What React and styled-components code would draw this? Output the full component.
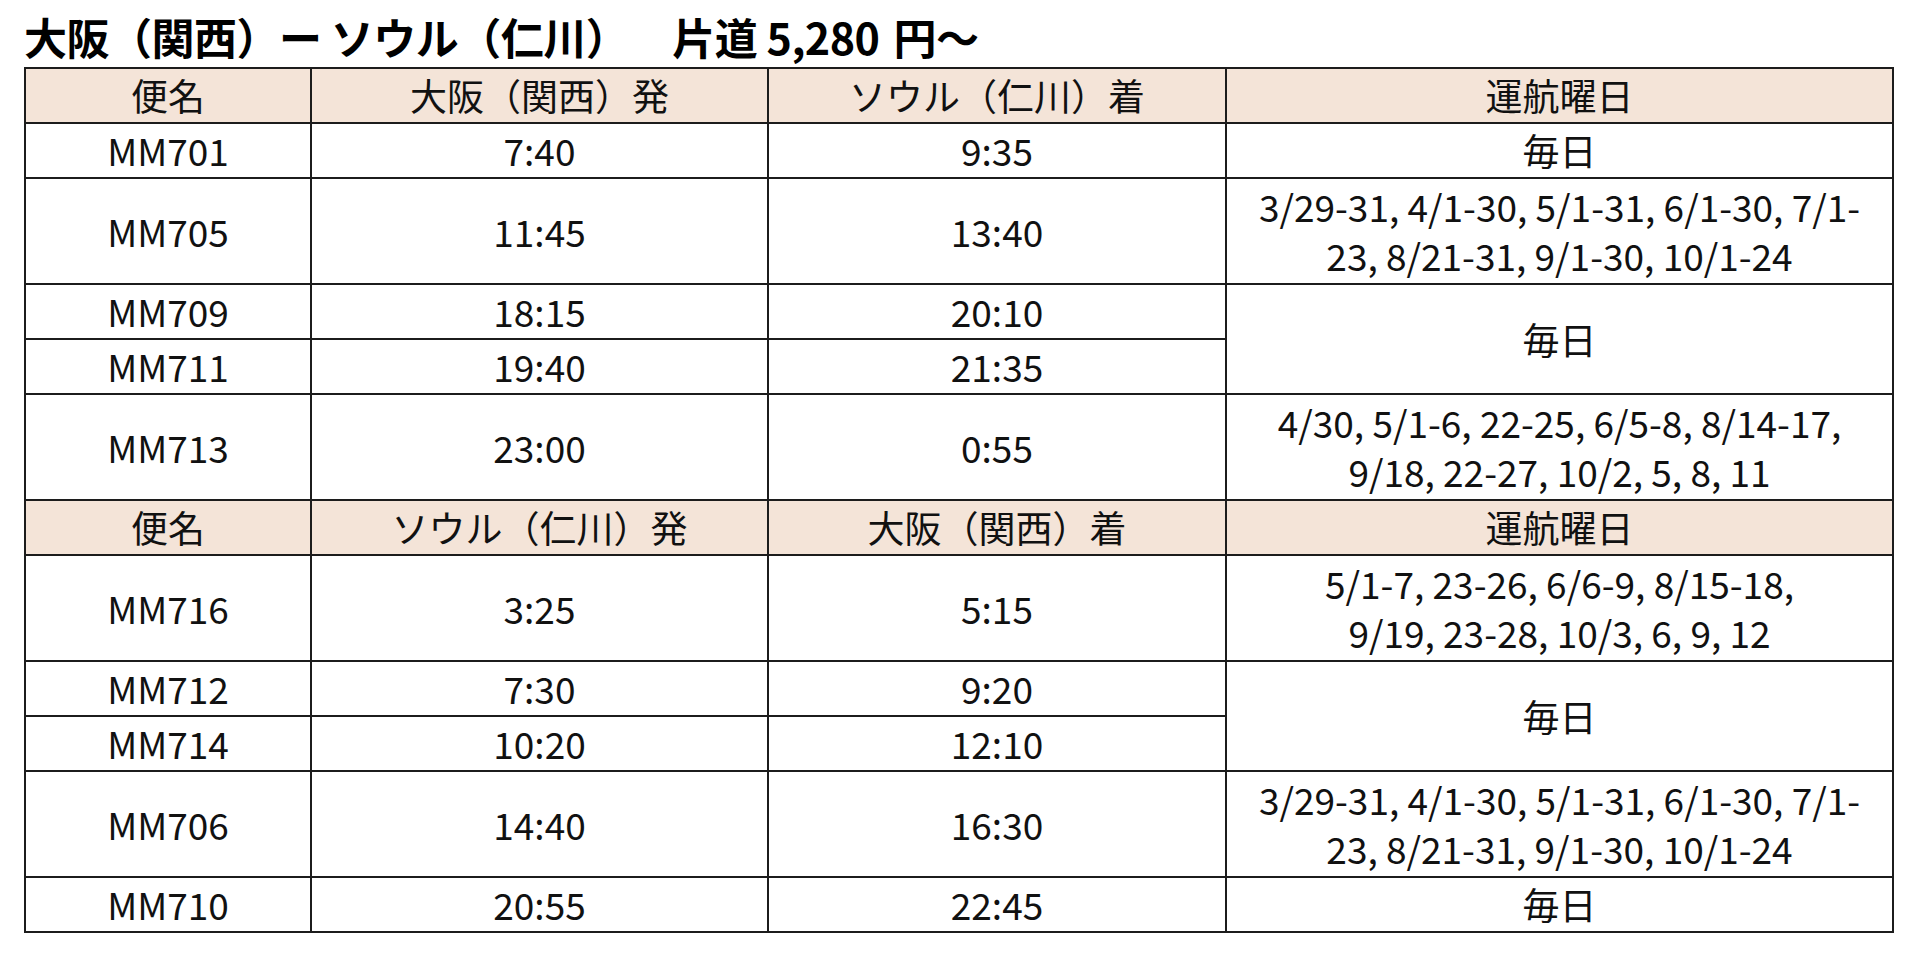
import React from 'react';
import styled, { createGlobalStyle } from 'styled-components';

const GlobalStyle = createGlobalStyle`
  body {
    margin: 0;
    background: #ffffff;
    font-family: "Noto Sans CJK JP", "Noto Sans", sans-serif;
    color: #111111;
  }
`;

const outbound = [
  { no: 'MM701', dep: '7:40', arr: '9:35', days: ['毎日'] },
  { no: 'MM705', dep: '11:45', arr: '13:40', days: ['3/29-31, 4/1-30, 5/1-31, 6/1-30, 7/1-', '23, 8/21-31, 9/1-30, 10/1-24'] },
  { no: 'MM709', dep: '18:15', arr: '20:10', days: ['毎日'], span: 2 },
  { no: 'MM711', dep: '19:40', arr: '21:35', skip: true },
  { no: 'MM713', dep: '23:00', arr: '0:55', days: ['4/30, 5/1-6, 22-25, 6/5-8, 8/14-17,', '9/18, 22-27, 10/2, 5, 8, 11'] },
];

const inbound = [
  { no: 'MM716', dep: '3:25', arr: '5:15', days: ['5/1-7, 23-26, 6/6-9, 8/15-18,', '9/19, 23-28, 10/3, 6, 9, 12'] },
  { no: 'MM712', dep: '7:30', arr: '9:20', days: ['毎日'], span: 2 },
  { no: 'MM714', dep: '10:20', arr: '12:10', skip: true },
  { no: 'MM706', dep: '14:40', arr: '16:30', days: ['3/29-31, 4/1-30, 5/1-31, 6/1-30, 7/1-', '23, 8/21-31, 9/1-30, 10/1-24'] },
  { no: 'MM710', dep: '20:55', arr: '22:45', days: ['毎日'] },
];

function App() {
  return (
    <Page>
      <GlobalStyle />
      <Title>
        大阪（関西）ー ソウル（仁川）<Gap />片道 5,280<Space />円〜
      </Title>
      <Table>
        <colgroup>
          <col style={{ width: 286 }} />
          <col style={{ width: 457 }} />
          <col style={{ width: 458 }} />
          <col style={{ width: 667 }} />
        </colgroup>
        <tbody>
          <HeadRow>
            <Cell>便名</Cell>
            <Cell>大阪（関西）発</Cell>
            <Cell>ソウル（仁川）着</Cell>
            <Cell>運航曜日</Cell>
          </HeadRow>
          {outbound.map(f => <FlightRow key={f.no} flight={f} />)}
          <HeadRow>
            <Cell>便名</Cell>
            <Cell>ソウル（仁川）発</Cell>
            <Cell>大阪（関西）着</Cell>
            <Cell>運航曜日</Cell>
          </HeadRow>
          {inbound.map(f => <FlightRow key={f.no} flight={f} />)}
        </tbody>
      </Table>
    </Page>
  );
}

function FlightRow({ flight }) {
  const tall = flight.days && flight.days.length > 1;
  return (
    <tr>
      <Cell $tall={tall}>{flight.no}</Cell>
      <Cell $tall={tall}>{flight.dep}</Cell>
      <Cell $tall={tall}>{flight.arr}</Cell>
      {!flight.skip && (
        <Cell $tall={tall} rowSpan={flight.span || 1}>
          {flight.days.map((line, i) => (
            <Line key={i}>{line}</Line>
          ))}
        </Cell>
      )}
    </tr>
  );
}

const Page = styled.div`
  padding: 10px 0 0 24px;
`;

const Title = styled.h1`
  margin: 0 0 5px;
  font-size: 43px;
  line-height: 52px;
  font-weight: 700;
  color: #000000;
  white-space: nowrap;
  letter-spacing: -0.5px;
`;

const Gap = styled.span`
  display: inline-block;
  width: 44px;
`;

const Space = styled.span`
  display: inline-block;
  width: 14px;
`;

const Table = styled.table`
  width: 1868px;
  table-layout: fixed;
  border-collapse: collapse;
  font-size: 37px;
  line-height: 49px;
`;

const HeadRow = styled.tr`
  background: #f4e4d8;
`;

const Cell = styled.td`
  border: 2px solid #1c1c1c;
  padding: ${p => (p.$tall ? '3px 4px' : '2px 4px')};
  text-align: center;
  vertical-align: middle;
  white-space: nowrap;
`;

const Line = styled.div``;

export default App;
